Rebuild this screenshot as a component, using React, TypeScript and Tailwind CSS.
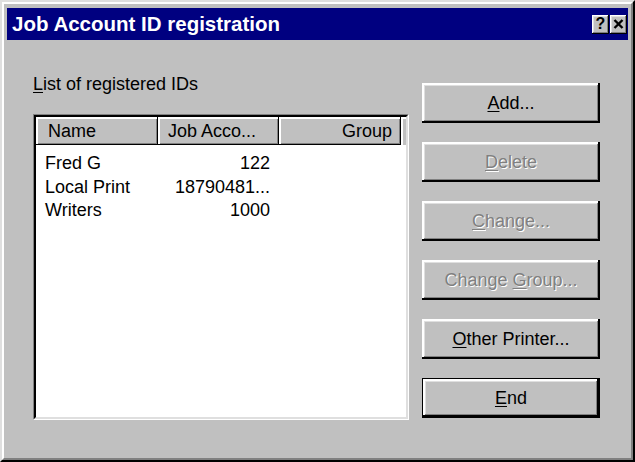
import React from "react";

const raised =
  "shadow-[inset_-2px_-2px_0_#000,inset_2px_2px_0_#fff,inset_-3px_-3px_0_#808080,inset_3px_3px_0_#dfdfdf]";
const smallRaised =
  "shadow-[inset_-1px_-1px_0_#000,inset_1px_1px_0_#fff,inset_-2px_-2px_0_#808080,inset_2px_2px_0_#dfdfdf]";
const headerRaised =
  "shadow-[inset_-1px_-1px_0_#000,inset_2px_2px_0_#fff,inset_-2px_-2px_0_#808080]";

function Btn({
  pre = "",
  u,
  post = "",
  disabled = false,
  def = false,
}: {
  pre?: string;
  u: string;
  post?: string;
  disabled?: boolean;
  def?: boolean;
}) {
  const text = disabled
    ? "text-[#808080] [text-shadow:1px_1px_0_#fff]"
    : "text-black";
  const inner = (
    <div
      className={`flex h-full w-full items-center justify-center bg-[#c0c0c0] ${raised} ${text} text-[18px] leading-[21px]`}
    >
      <span className="whitespace-pre">
        {pre}
        <span className="underline decoration-1 underline-offset-[2px]">{u}</span>
        {post}
      </span>
    </div>
  );
  if (def) {
    return <div className="h-[40px] w-[178px] border border-black">{inner}</div>;
  }
  return <div className="h-[40px] w-[178px]">{inner}</div>;
}

export default function App() {
  const rows = [
    { name: "Fred G", id: "122" },
    { name: "Local Print", id: "18790481..." },
    { name: "Writers", id: "1000" },
  ];
  return (
    <div className="h-[462px] w-[635px] font-['Liberation_Sans',Arial,sans-serif] select-none">
      <div className="h-full w-full border-2 border-t-[#dfdfdf] border-l-[#dfdfdf] border-b-black border-r-black bg-[#c0c0c0]">
        <div className="flex h-full w-full flex-col border-2 border-t-white border-l-white border-b-[#808080] border-r-[#808080] px-[3px] pt-[4px] pb-[3px]">
          {/* Title bar */}
          <div className="flex h-[32px] shrink-0 items-center bg-[#000080] pl-[5px] pr-[1px]">
            <span className="flex-1 text-[20.5px] font-bold leading-[24px] text-white">
              Job Account ID registration
            </span>
            <div className="flex items-center gap-[1px]">
              <div
                className={`flex h-[19px] w-[17px] items-center justify-center bg-[#c0c0c0] ${smallRaised}`}
              >
                <span className="text-[16px] font-bold leading-[16px] text-black">?</span>
              </div>
              <div
                className={`flex h-[19px] w-[17px] items-center justify-center bg-[#c0c0c0] ${smallRaised}`}
              >
                <svg width="11" height="10" viewBox="0 0 11 10">
                  <path d="M1.5 1 L9.5 9 M9.5 1 L1.5 9" stroke="#000" strokeWidth="2.4" />
                </svg>
              </div>
            </div>
          </div>

          {/* Client area */}
          <div className="flex flex-1 pl-[26px]">
            {/* Left column */}
            <div className="flex w-[376px] flex-col pt-[34px]">
              <div className="h-[21px] text-[18px] leading-[21px] text-black">
                <span className="underline decoration-1 underline-offset-[2px]">L</span>
                ist of registered IDs
              </div>
              <div className="mt-[19px] h-[306px] border border-t-[#808080] border-l-[#808080] border-b-white border-r-white">
                <div className="flex h-full w-full flex-col border-2 border-t-black border-l-black border-b-[#dfdfdf] border-r-[#dfdfdf] bg-white">
                  {/* Header */}
                  <div className="flex h-[28px] shrink-0 text-[18px] leading-[21px] text-black">
                    <div
                      className={`flex w-[122px] items-center bg-[#c0c0c0] pl-[12px] ${headerRaised}`}
                    >
                      Name
                    </div>
                    <div
                      className={`flex w-[121px] items-center bg-[#c0c0c0] pl-[10px] ${headerRaised}`}
                    >
                      Job Acco...
                    </div>
                    <div
                      className={`flex w-[122px] items-center justify-end bg-[#c0c0c0] pr-[9px] ${headerRaised}`}
                    >
                      Group
                    </div>
                    <div className="flex-1 bg-[#c0c0c0] shadow-[inset_2px_2px_0_#fff]" />
                  </div>
                  {/* Rows */}
                  <div className="flex flex-col pt-[7px] text-[18px] text-black">
                    {rows.map((r) => (
                      <div key={r.name} className="flex h-[23.5px] items-center leading-[21px]">
                        <div className="w-[122px] pl-[9px] whitespace-nowrap">{r.name}</div>
                        <div className="w-[121px] pr-[9px] text-right whitespace-nowrap">
                          {r.id}
                        </div>
                      </div>
                    ))}
                  </div>
                </div>
              </div>
            </div>

            {/* Buttons */}
            <div className="ml-[13px] flex flex-col gap-[19px] pt-[43px]">
              <Btn u="A" post="dd..." />
              <Btn u="D" post="elete" disabled />
              <Btn u="C" post="hange..." disabled />
              <Btn pre="Change " u="G" post="roup..." disabled />
              <Btn u="O" post="ther Printer..." />
              <Btn u="E" post="nd" def />
            </div>
          </div>
        </div>
      </div>
    </div>
  );
}
